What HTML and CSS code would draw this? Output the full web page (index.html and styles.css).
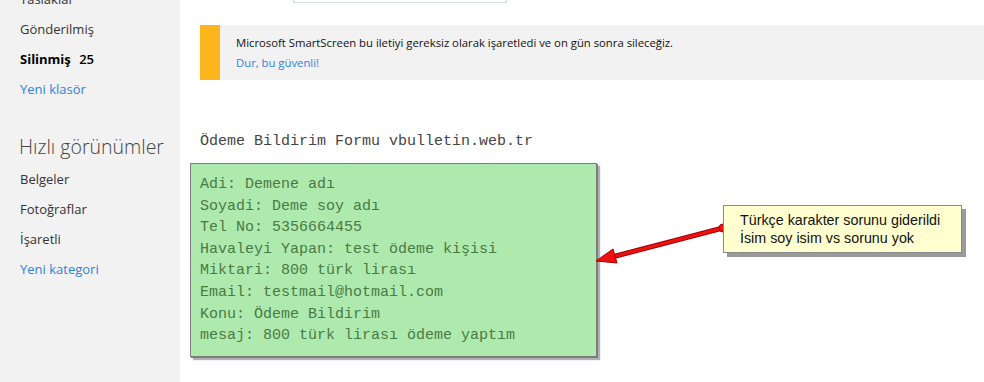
FILE: index.html
```html
<!DOCTYPE html>
<html lang="tr">
<head>
<meta charset="UTF-8">
<meta name="viewport" content="width=device-width, initial-scale=1.0">
<title>Silinmiş - Outlook</title>
<link rel="stylesheet" href="styles.css">
</head>
<body>
  <div class="app">
    <div class="sidebar">
      <ul class="folders">
        <li class="item">Taslaklar</li>
        <li class="item">Gönderilmiş</li>
        <li class="item active">Silinmiş <span class="count">25</span></li>
        <li class="item link">Yeni klasör</li>
      </ul>
      <div class="section-title">Hızlı görünümler</div>
      <ul class="folders">
        <li class="item">Belgeler</li>
        <li class="item">Fotoğraflar</li>
        <li class="item">İşaretli</li>
        <li class="item link">Yeni kategori</li>
      </ul>
    </div>

    <div class="main">
      <div class="search"></div>

      <div class="notice">
        <div class="notice-strip"></div>
        <div class="notice-body">
          <div>Microsoft SmartScreen bu iletiyi gereksiz olarak işaretledi ve on gün sonra sileceğiz.</div>
          <div class="link">Dur, bu güvenli!</div>
        </div>
      </div>

      <div class="mail-title">Ödeme Bildirim Formu vbulletin.web.tr</div>

      <div class="mail-box">
        <div>Adi: Demene adı</div>
        <div>Soyadi: Deme soy adı</div>
        <div>Tel No: 5356664455</div>
        <div>Havaleyi Yapan: test ödeme kişisi</div>
        <div>Miktari: 800 türk lirası</div>
        <div>Email: testmail@hotmail.com</div>
        <div>Konu: Ödeme Bildirim</div>
        <div>mesaj: 800 türk lirası ödeme yaptım</div>
      </div>
    </div>

    <!-- annotation drawn over the screenshot -->
    <svg class="arrow" width="984" height="382" viewBox="0 0 984 382">
      <line x1="723" y1="228" x2="612" y2="257" stroke="#a00000" stroke-width="5" stroke-linecap="round"/>
      <line x1="723" y1="228" x2="612" y2="257" stroke="#ee1111" stroke-width="3" stroke-linecap="round"/>
      <polygon points="596,261 617,263 613,249" fill="#ee1111" stroke="#a00000" stroke-width="1"/>
      <circle cx="723" cy="228" r="4" fill="#ee1111" stroke="#a00000" stroke-width="1"/>
    </svg>
    <div class="callout">
      Türkçe karakter sorunu giderildi<br>
      İsim soy isim vs sorunu yok
    </div>
  </div>
</body>
</html>
```

FILE: styles.css
```css
body {
  margin: 0;
  overflow: hidden;
  background: #fff;
  font-family: "Open Sans", "Noto Sans", sans-serif;
}

.app {
  display: flex;
  position: relative;
  width: 984px;
  height: 382px;
  overflow: hidden;
}

.sidebar {
  width: 180px;
  flex-shrink: 0;
  background: #f2f2f2;
}

.folders {
  list-style: none;
  margin: 0;
  padding: 0;
}

.folders:first-child {
  margin-top: -16px;
}

.item {
  height: 30px;
  line-height: 30px;
  padding-left: 20px;
  font-size: 13px;
  color: #333;
}

.item.active {
  font-weight: 700;
  color: #000;
}

.item .count {
  margin-left: 5px;
  font-weight: 600;
}

.link {
  color: #2f82dc;
}

.section-title {
  margin-top: 25px;
  height: 35px;
  line-height: 35px;
  padding-left: 19px;
  font-size: 19.5px;
  font-weight: 300;
  color: #444;
}

.main {
  flex: 1;
  padding-left: 20px;
}

.search {
  margin-top: -27px;
  margin-left: 93px;
  width: 212px;
  height: 28px;
  border: 1px solid #d4dae2;
}

.notice {
  display: flex;
  margin-top: 22px;
  height: 55px;
  background: #f2f2f2;
}

.notice-strip {
  width: 20px;
  background: #fdb51e;
}

.notice-body {
  padding: 8px 0 0 16px;
  font-size: 11.3px;
  line-height: 20px;
  color: #111;
}

.mail-title {
  margin-top: 52px;
  line-height: 20px;
  font-family: "Liberation Mono", monospace;
  font-size: 15px;
  color: #444;
}

.mail-box {
  margin: 11px 0 0 -10px;
  width: 396px;
  padding: 10px 0 9px 9px;
  background: #aeeaae;
  border: 1px solid #7d7d7d;
  box-shadow: 1px 1px 0 #7d7d7d, 3px 3px 1px #b0b0b0;
  font-family: "Liberation Mono", monospace;
  font-size: 15px;
  line-height: 21.6px;
  color: #4a7a44;
}

.arrow {
  position: absolute;
  top: 0;
  left: 0;
  pointer-events: none;
}

.callout {
  position: absolute;
  left: 723px;
  top: 205px;
  width: 221px;
  height: 41px;
  padding: 5px 0 0 16px;
  background: #ffffcf;
  border: 1px solid #8a8a8a;
  box-shadow: 4px 4px 0 #9a9a9a;
  font-family: "Liberation Sans", Arial, sans-serif;
  font-size: 14.3px;
  line-height: 18px;
  color: #111;
}
```
